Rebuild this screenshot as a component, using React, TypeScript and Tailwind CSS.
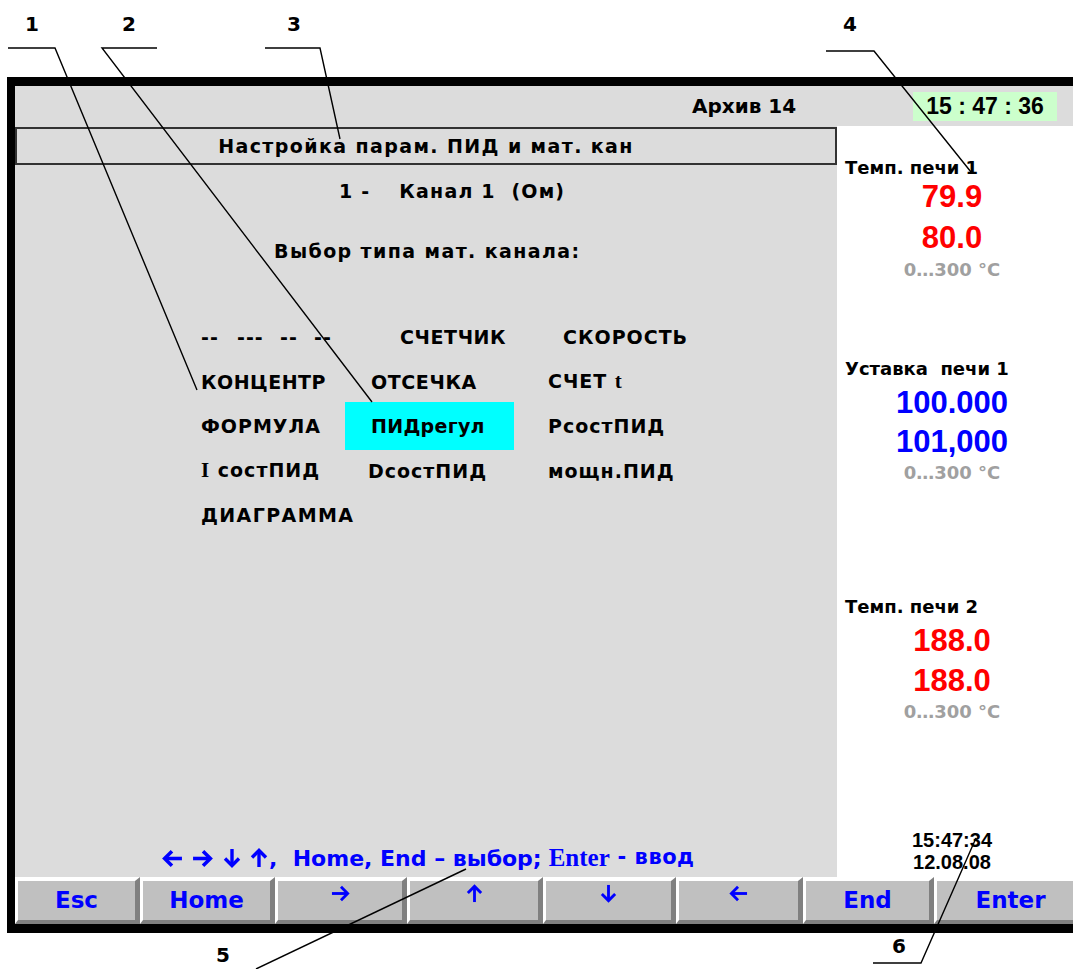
import React from "react";

type Dir = "left" | "right" | "up" | "down";

// bold arrow glyph as drawn on the device screen
const Arrow = ({ dir, size, stroke }: { dir: Dir; size: number; stroke: number }) => {
  const rot = { right: 0, down: 90, left: 180, up: 270 }[dir];
  return (
    <svg width={size} height={size} viewBox="0 0 20 20" className="shrink-0">
      <g transform={`rotate(${rot} 10 10)`} stroke="#0000ff" strokeWidth={stroke} fill="none" strokeLinejoin="miter">
        <path d="M1 10 H17" />
        <path d="M10.5 3 L17.5 10 L10.5 17" />
      </g>
    </svg>
  );
};

type KeyProps = { label?: string; w: string; dir?: Dir };

const Key = ({ label, w, dir }: KeyProps) => (
  <div
    className={`${w} flex h-full shrink-0 items-center justify-center border-t-[4px] border-l-[3px] border-r-[5px] border-b-[4px] border-t-white border-l-white border-r-[#808080] border-b-[#808080] bg-[#c0c0c0] text-[23px] text-[#0000ff] ${
      dir ? "pb-[15px]" : ""
    }`}
  >
    {dir ? <Arrow dir={dir} size={19} stroke={3} /> : label}
  </div>
);

const Callouts = () => (
  <>
    <svg
      className="pointer-events-none absolute left-0 top-0"
      width={1073}
      height={969}
      viewBox="0 0 1073 969"
    >
      <g stroke="#000" strokeWidth={1.4} fill="none">
        <polyline points="8,48 55,48 197,390" />
        <polyline points="157,48 102,48 372,402" />
        <polyline points="265,48 320,48 340,139" />
        <polyline points="826,51 874,51 971,172" />
        <line x1="256" y1="969" x2="466" y2="869" />
        <polyline points="873,963 921,963 976,838" />
      </g>
    </svg>
    <span className="absolute left-[25px] top-[14px] text-[20px] leading-none">1</span>
    <span className="absolute left-[122px] top-[14px] text-[20px] leading-none">2</span>
    <span className="absolute left-[287px] top-[14px] text-[20px] leading-none">3</span>
    <span className="absolute left-[843px] top-[14px] text-[20px] leading-none">4</span>
    <span className="absolute left-[216px] top-[945px] text-[20px] leading-none">5</span>
    <span className="absolute left-[892px] top-[936px] text-[20px] leading-none">6</span>
  </>
);

type ReadingProps = {
  label: string;
  a: string;
  b: string;
  color: string;
  mt: string;
  g1: string;
  g2: string;
  g3: string;
};

const Reading = ({ label, a, b, color, mt, g1, g2, g3 }: ReadingProps) => (
  <div className={`${mt} flex flex-col`}>
    <div className="h-[20px] whitespace-pre pl-[8px] text-[18px] leading-[20px]">{label}</div>
    <div className={`${g1} h-[32px] text-center font-['Liberation_Sans',sans-serif] text-[31px] leading-[32px] ${color}`}>
      {a}
    </div>
    <div className={`${g2} h-[32px] text-center font-['Liberation_Sans',sans-serif] text-[31px] leading-[32px] ${color}`}>
      {b}
    </div>
    <div className={`${g3} h-[20px] text-center text-[18px] leading-[20px] text-[#a0a0a0]`}>0…300 °C</div>
  </div>
);

export default function App() {
  return (
    <div className="relative h-[969px] w-[1073px] overflow-hidden bg-white font-['DejaVu_Sans',sans-serif] font-bold text-black">
      <div className="ml-[7px] mt-[77px] flex w-[1100px] flex-col border-t-[9px] border-l-[8px] border-b-[9px] border-black">
        {/* status bar */}
        <div className="flex h-[40px] items-center bg-[#dcdcdc]">
          <div className="w-[898px] pl-[677px] text-[20px]">Архив 14</div>
          <div className="flex h-[29px] w-[144px] items-center justify-center bg-[#ccffcc] font-['Liberation_Sans',sans-serif] text-[23px]">
            15 : 47 : 36
          </div>
        </div>

        <div className="flex h-[751px]">
          {/* menu screen */}
          <div className="flex w-[822px] flex-col bg-[#dcdcdc] text-[19px]">
            <div className="mt-[1px] flex h-[38px] items-center justify-center border-2 border-[#333] tracking-[1.4px]">
              Настройка парам. ПИД и мат. кан
            </div>
            <div className="mt-[14px] flex h-[24px] items-center whitespace-pre pl-[324px] tracking-[1.2px]">
              <span>1 -</span>
              <span className="ml-[29px]">Канал 1  (Ом)</span>
            </div>
            <div className="mt-[36px] flex h-[24px] items-center pl-[259px] tracking-[1.4px]">Выбор типа мат. канала:</div>

            <div className="mt-[52px] grid auto-rows-[44.5px] grid-cols-[144px_203px_1fr] items-center pl-[186px] tracking-[1px]">
              <div className="flex">
                <span className="w-[36px]">--</span>
                <span className="w-[43px]">---</span>
                <span className="w-[34px]">--</span>
                <span>--</span>
              </div>
              <div className="pl-[55px] tracking-[0.6px]">СЧЕТЧИК</div>
              <div className="pl-[15px]">СКОРОСТЬ</div>

              <div className="tracking-[0.5px]">КОНЦЕНТР</div>
              <div className="pl-[26px] tracking-[0.6px]">ОТСЕЧКА</div>
              <div>
                СЧЕТ <span className="font-['Liberation_Serif',serif] text-[21px]">t</span>
              </div>

              <div>ФОРМУЛА</div>
              <div className="flex h-[48px] w-[169px] items-center bg-[#00ffff] pl-[26px] tracking-[0.3px]">ПИДрегул</div>
              <div>РсостПИД</div>

              <div>
                <span className="font-['Liberation_Serif',serif] text-[21px]">I</span> состПИД
              </div>
              <div className="pl-[23px]">DсостПИД</div>
              <div>мощн.ПИД</div>

              <div className="tracking-[1.4px]">ДИАГРАММА</div>
            </div>

            <div className="mb-[7px] mt-auto flex h-[24px] items-center whitespace-pre pl-[147px] text-[22px] text-[#0000ff]">
              <Arrow dir="left" size={21} stroke={3.4} />
              <span className="w-[9px]" />
              <Arrow dir="right" size={21} stroke={3.4} />
              <span className="w-[9px]" />
              <Arrow dir="down" size={20} stroke={3.4} />
              <span className="w-[7px]" />
              <Arrow dir="up" size={20} stroke={3.4} />
              <span>,  Home, End – выбор;</span>
              <span className="w-[7px]" />
              <span className="font-['Liberation_Serif',serif] text-[25px]">Enter</span>
              <span className="text-[21px] tracking-[0.5px]"> - ввод</span>
            </div>
          </div>

          {/* channel readings */}
          <div className="w-[236px] bg-white">
            <div className="w-[230px]">
              <Reading
                mt="mt-[32px]"
                g1="mt-[3px]"
                g2="mt-[9px]"
                g3="mt-[6px]"
                label="Темп. печи 1"
                a="79.9"
                b="80.0"
                color="text-[#ff0000]"
              />
              <Reading
                mt="mt-[79px]"
                g1="mt-[8px]"
                g2="mt-[7px]"
                g3="mt-[5px]"
                label="Уставка  печи 1"
                a="100.000"
                b="101,000"
                color="text-[#0000ff]"
              />
              <Reading
                mt="mt-[114px]"
                g1="mt-[8px]"
                g2="mt-[8px]"
                g3="mt-[5px]"
                label="Темп. печи 2"
                a="188.0"
                b="188.0"
                color="text-[#ff0000]"
              />
              <div className="mt-[107px] text-center font-['Liberation_Sans',sans-serif] text-[20px] leading-[22px]">
                <div>15:47:34</div>
                <div>12.08.08</div>
              </div>
            </div>
          </div>
        </div>

        {/* soft keys */}
        <div className="flex h-[47px]">
          <Key label="Esc" w="w-[125px]" />
          <Key label="Home" w="w-[135px]" />
          <Key dir="right" w="w-[132px]" />
          <Key dir="up" w="w-[136px]" />
          <Key dir="down" w="w-[133px]" />
          <Key dir="left" w="w-[127px]" />
          <Key label="End" w="w-[131px]" />
          <Key label="Enter" w="w-[155px]" />
        </div>
      </div>
      <Callouts />
    </div>
  );
}
